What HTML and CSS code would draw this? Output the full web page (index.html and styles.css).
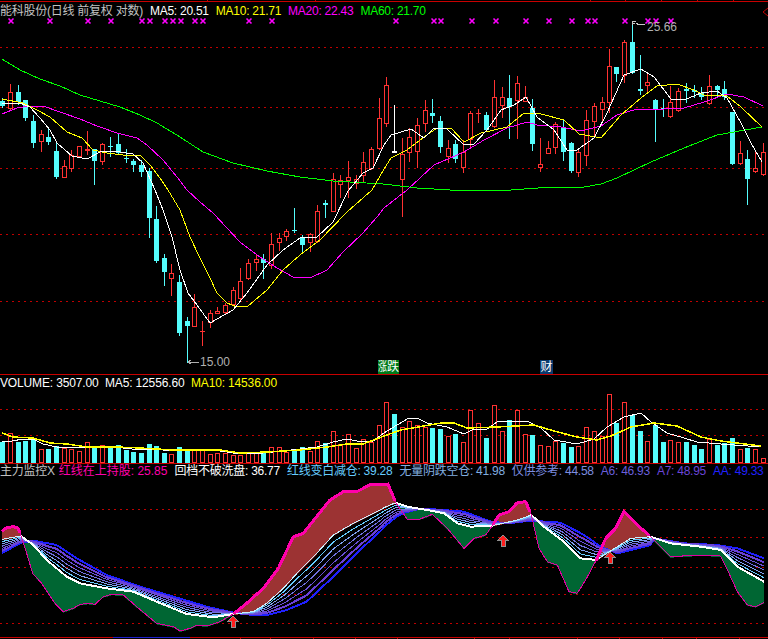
FILE: index.html
```html
<!DOCTYPE html>
<html lang="zh">
<head>
<meta charset="utf-8">
<title>能科股份 日线</title>
<link rel="stylesheet" href="styles.css">
</head>
<body>
<main class="chart">
  <section class="panel panel-price">
    <svg class="plot" id="price" width="768" height="374"></svg>
    <div class="legend">
      <span class="t-grey">能科股份(日线 前复权 对数)</span>
      <span class="t-white">MA5: 20.51</span>
      <span class="t-yellow">MA10: 21.71</span>
      <span class="t-magenta">MA20: 22.43</span>
      <span class="t-green">MA60: 21.70</span>
    </div>
    <span class="mark mark-high">25.66</span>
    <span class="mark mark-low">15.00</span>
    <span class="badge badge-green"><span class="squeezed">涨</span>跌</span>
    <span class="badge badge-blue">财</span>
  </section>
  <section class="panel panel-volume">
    <svg class="plot" id="volume" width="768" height="89"></svg>
    <div class="legend">
      <span class="t-white">VOLUME: 3507.00</span>
      <span class="t-white">MA5: 12556.60</span>
      <span class="t-yellow">MA10: 14536.00</span>
    </div>
  </section>
  <section class="panel panel-ribbon">
    <svg class="plot" id="ribbon" width="768" height="176"></svg>
    <div class="legend">
      <span class="t-grey">主力监控X</span>
      <span class="t-pink">红线在上持股: 25.85</span>
      <span class="t-white">回档不破洗盘: 36.77</span>
      <span class="t-sky">红线变白减仓: 39.28</span>
      <span class="t-steel">无量阴跌空仓: 41.98</span>
      <span class="t-slate">仅供参考: 44.58</span>
      <span class="t-violet">A6: 46.93</span>
      <span class="t-purple">A7: 48.95</span>
      <span class="t-blue">AA: 49.33</span>
    </div>
  </section>
</main>
<script src="chart.js"></script>
</body>
</html>
```
FILE: styles.css
```css
html, body {
  margin: 0;
  padding: 0;
  background: #000;
}
.chart {
  width: 768px;
  height: 639px;
  display: flex;
  flex-direction: column;
  overflow: hidden;
  background: #000;
  font-family: "Liberation Sans", "Noto Sans CJK SC", sans-serif;
  font-size: 12px;
}
.panel {
  position: relative;
  flex: none;
}
.panel-price { height: 374px; }
.panel-volume { height: 89px; }
.panel-ribbon { height: 176px; }
.plot {
  position: absolute;
  left: 0;
  top: 0;
  display: block;
}
.legend {
  position: relative;
  display: flex;
  gap: 7px;
  white-space: nowrap;
  line-height: 14px;
  letter-spacing: -0.25px;
}
.panel-price .legend { padding-top: 4px; }
.panel-volume .legend {
  padding-top: 2px;
  gap: 6.5px;
  letter-spacing: -0.15px;
}
.panel-ribbon .legend { padding-top: 1px; }
.t-grey { color: #c0c0c0; }
.t-white { color: #fff; }
.t-yellow { color: #ffff00; }
.t-magenta { color: #ff00ff; }
.t-green { color: #00ff00; }
.t-pink {
  color: #ff00aa;
  margin-left: -3px;
  letter-spacing: 0;
}
.t-sky { color: #66ccff; }
.t-steel { color: #80aee0; }
.t-slate { color: #7d8ee0; }
.t-violet { color: #6a5fdc; }
.t-purple { color: #6a45d8; }
.t-blue { color: #2020ff; }
.mark {
  position: absolute;
  color: #b0b0b0;
  line-height: 14px;
}
.mark-high { left: 647px; top: 20px; }
.mark-low { left: 200px; top: 355px; }
.badge {
  position: absolute;
  top: 360px;
  height: 14px;
  line-height: 14px;
  color: #fff;
}
.badge-green {
  left: 378px;
  width: 21px;
  background: #007a1a;
  white-space: nowrap;
  display: flex;
}
.squeezed {
  display: block;
  width: 9px;
  transform: scaleX(0.75);
  transform-origin: left center;
}
.badge-blue {
  left: 540px;
  width: 13px;
  background: #0a3a6e;
  text-align: center;
}
```
FILE: chart.js
```js
var NS = "http://www.w3.org/2000/svg";
function el(parent, name, attrs) {
  var n = document.createElementNS(NS, name);
  for (var k in attrs) n.setAttribute(k, attrs[k]);
  parent.appendChild(n);
  return n;
}
function pts(flat) {
  var out = [];
  for (var i = 0; i < flat.length; i += 2) out.push(flat[i] + "," + flat[i + 1]);
  return out.join(" ");
}
function line(svg, flat, color, w) {
  el(svg, "polyline", { points: pts(flat), fill: "none", stroke: color, "stroke-width": w || 1, "shape-rendering": "crispEdges" });
}
function hline(svg, y, color, x1, x2, dash) {
  var a = { x1: x1, x2: x2, y1: y + 0.5, y2: y + 0.5, stroke: color, "shape-rendering": "crispEdges" };
  if (dash) a["stroke-dasharray"] = dash;
  el(svg, "line", a);
}
function rect(svg, x, y, w, h, fill, stroke) {
  var a = { x: x, y: y, width: w, height: h, fill: fill, "shape-rendering": "crispEdges" };
  if (stroke) a.stroke = stroke;
  el(svg, "rect", a);
}

var RED = "#ff3232", CYAN = "#54fcfc", GRID = "#c00000", EDGE = "#c80000";

// type, centre x, high, top, bottom, low, volume top
var C = [
["C",2,98,101,106,108,442],["R",10,84,92,109,110,433],["C",18,85,92,102,105,442],["C",25,100,100,118,121,441],
["C",33,115,121,143,148,439],["R",41,130,134,142,152,449],["C",48,128,137,142,145,449],["C",56,143,151,177,179,446],
["R",64,160,166,178,178,448],["R",71,150,155,169,172,449],["R",79,146,146,157,158,451],["R",87,131,149,151,155,442],
["C",94,149,149,161,185,447],["R",102,143,144,162,165,445],["C",110,137,146,147,157,447],["C",118,133,144,153,154,445],
["C",126,149,158,159,163,450],["C",133,159,161,165,172,452],["C",141,160,165,172,177,453],["C",149,168,171,218,238,444],
["C",156,206,219,261,263,446],["C",164,254,258,272,286,453],["R",171,264,273,279,296,454],["C",179,275,282,333,336,447],
["C",187,317,321,326,363,450],["R",194,294,307,327,327,450],["R",202,321,331,332,346,449],["R",210,310,313,323,328,454],
["R",217,307,311,314,314,453],["R",225,303,305,313,315,453],["R",233,287,290,305,306,455],["R",240,268,281,299,300,455],
["R",248,259,263,279,280,452],["R",256,255,259,263,271,452],["C",263,254,259,263,279,453],["R",271,233,244,266,269,447],
["R",279,233,238,243,251,447],["R",286,229,231,237,241,452],["C",294,208,230,231,233,449],["C",302,235,238,245,252,447],
["R",310,233,234,243,252,451],["R",317,205,211,242,243,441],["C",325,200,203,205,218,443],["R",333,173,179,212,212,431],
["R",340,175,180,185,198,444],["R",348,161,177,181,198,434],["R",356,175,179,184,189,448],["R",363,152,162,176,183,439],
["R",371,147,149,169,170,442],["R",379,98,118,149,150,425],["R",386,77,85,124,127,402],["W",394,105,151,153,153,414],
["R",402,138,154,180,217,427],["R",409,128,137,153,162,421],["R",417,118,125,152,168,425],["R",425,100,110,124,132,427],
["C",432,99,113,116,123,428],["C",440,116,121,147,153,429],["R",448,140,148,157,163,436],["C",455,140,144,159,163,434],
["R",463,140,152,168,173,442],["R",470,111,113,140,147,410],["R",478,109,113,114,123,423],["C",486,112,115,130,132,438],
["R",494,80,97,127,128,405],["R",502,87,97,106,118,431],["C",509,75,98,107,139,420],["R",517,76,83,101,139,410],
["R",525,86,97,102,102,434],["C",532,99,108,144,151,435],["R",540,138,164,168,172,445],["R",548,141,148,154,154,446],
["R",555,122,124,148,154,441],["C",563,119,127,152,161,443],["C",571,142,143,171,173,447],["R",578,150,152,173,177,446],
["R",586,110,120,156,166,427],["R",594,103,106,122,137,431],["R",602,97,102,110,122,436],["R",609,49,66,103,113,394],
["C",616,67,67,74,82,423],["R",624,40,42,76,83,402],["C",632,21,42,73,74,415],["C",640,55,89,91,95,431],
["R",647,73,82,86,93,441],["C",655,99,100,110,142,425],["C",663,99,108,109,117,442],["R",670,86,102,117,118,440],
["R",678,88,91,111,112,442],["C",686,83,89,91,103,442],["C",694,85,90,92,98,445],["C",701,87,93,97,100,449],
["R",709,75,86,104,105,439],["C",717,85,86,90,97,445],["C",724,81,89,97,100,443],["C",732,112,112,164,165,438],
["R",740,141,153,164,165,449],["C",747,150,159,179,205,448],["R",755,150,168,172,173,449],["R",763,143,152,175,176,458]
];

var MA60 = [2,59,20,70,40,79,60,86,80,95,100,101,120,107,140,115,157,123,180,137,203,152,233,163,267,171,300,177,333,181,383,184,417,188,450,190,511,190,551,187,584,187,601,184,617,178,651,162,684,148,717,135,762,127];
var MA20 = [2,114,17,108,30,106,43,106,60,112,80,119,97,126,117,133,137,138,147,145,163,160,177,177,187,190,200,202,213,213,240,242,257,255,277,268,293,277,310,278,327,270,343,252,363,233,377,217,384,208,407,190,434,165,464,152,484,140,507,128,527,122,537,125,561,127,581,131,601,126,617,115,637,109,664,109,684,108,704,102,727,94,744,97,763,106];
var MA10 = [2,99,23,103,37,110,50,117,67,132,82,138,93,150,107,153,123,155,140,155,150,165,160,178,168,190,180,210,190,237,200,258,210,278,217,293,227,303,237,307,248,306,267,290,283,270,300,255,320,240,347,212,372,190,384,169,391,158,407,150,424,137,437,128,451,128,464,142,481,133,507,127,524,113,541,114,564,120,579,134,601,138,621,115,641,98,657,86,677,84,694,90,704,95,727,96,741,107,762,127];
var MA5 = [2,103,20,103,30,107,40,118,50,130,57,143,72,156,87,159,100,152,113,151,133,154,143,163,155,190,163,210,172,237,180,270,188,293,197,305,210,323,233,310,247,293,267,265,283,250,300,238,317,237,333,222,348,191,363,173,373,168,384,145,391,135,401,132,411,129,424,138,434,128,447,129,464,145,474,144,487,130,501,110,514,105,526,97,537,117,554,130,567,150,577,150,594,138,607,113,624,75,641,69,654,77,671,99,684,100,701,93,717,91,727,98,741,123,751,143,762,162];

function drawPrice() {
  var s = document.getElementById("price");
  hline(s, 1, EDGE, 0, 768);
  [207, 315, 590, 625, 661, 697, 733].forEach(function (x) { rect(s, x, 0, 1, 1, EDGE); });
  [47, 107, 168, 234, 301].forEach(function (y) { hline(s, y, GRID, 0, 768, "2 4"); });
  C.forEach(function (c) {
    var col = c[0] === "C" ? CYAN : c[0] === "W" ? "#fff" : RED, x = c[1] - 2;
    rect(s, x + 2, c[2], 1, c[5] - c[2], col);
    if (c[4] - c[3] <= 2) rect(s, x, c[3], 5, Math.max(c[4] - c[3], 1), col);
    else if (c[0] === "R") rect(s, x + 0.5, c[3] + 0.5, 4, c[4] - c[3] - 1, "#000", col);
    else rect(s, x, c[3], 5, c[4] - c[3], col);
  });
  line(s, MA60, "#00ff00");
  line(s, MA20, "#ff00ff");
  line(s, MA10, "#ffff00");
  line(s, MA5, "#ffffff");
  [11,50,88,111,142,150,165,173,181,195,203,249,272,396,434,441,472,496,526,549,572,588,595,625,648,656,671].forEach(function (x) {
    el(s, "path", { d: "M" + (x - 2.5) + " 18.5l5 5m0-5l-5 5", stroke: "#ff00ff", fill: "none", "stroke-width": 1.6 });
  });
  el(s, "path", { d: "M768 8l-5 4 5 4", stroke: "#c00000", fill: "none" });
  el(s, "path", { d: "M632.5 25v-4h3M632.5 23h2M636 23l3 2 3-1 3 1", stroke: "#c8c8c8", fill: "none", "shape-rendering": "crispEdges" });
  el(s, "path", { d: "M188 362h11M188 362l3-2M188 362l3 2", stroke: "#b0b0b0", fill: "none", "shape-rendering": "crispEdges" });
}

var VMA5 = [2,441,12,441,23,439,33,439,43,444,57,447,70,448,83,447,107,447,123,448,140,450,157,449,170,451,187,450,213,450,227,452,240,454,263,453,283,451,300,449,317,447,333,442,347,439,357,441,373,441,384,433,397,425,409,418,417,418,427,423,447,427,464,434,474,429,487,429,497,422,511,421,527,421,541,428,554,440,577,444,594,439,607,427,624,417,641,413,651,422,667,433,684,438,697,442,721,444,761,447];
var VMA10 = [2,433,13,437,33,438,50,443,67,444,87,447,117,447,140,448,173,450,220,450,240,453,267,452,300,450,327,447,347,444,363,444,384,436,401,430,424,426,441,423,454,423,467,428,497,427,534,425,554,431,577,437,597,440,611,436,631,427,654,423,677,426,701,437,721,441,761,446];

function drawVolume() {
  var s = document.getElementById("volume"), top = 374;
  hline(s, 0, EDGE, 0, 768);
  [409, 435].forEach(function (y) { hline(s, y - top, GRID, 0, 768, "2 4"); });
  C.forEach(function (c) {
    var y = c[6] - top, b = 89, x = c[1] - 2;
    if (c[0] === "R") rect(s, x + 0.5, y + 0.5, 4, b - y - 1, "#000", RED);
    else rect(s, x, y, 5, b - y, CYAN);
  });
  var shift = function (a) { return a.map(function (v, i) { return i % 2 ? v - top : v; }); };
  line(s, shift(VMA5), "#ffffff");
  line(s, shift(VMA10), "#ffff00", 1.5);
}

function conv(left, right) {
  var out = [];
  for (var i = 0; i < left.length; i += 2) out.push([left[i] / 3, 460 + left[i + 1] / 3]);
  for (i = 0; i < right.length; i += 2) out.push([384 + right[i] / 3, 460 + right[i + 1] / 3]);
  return out;
}
function at(curve, x) {
  if (x <= curve[0][0]) return curve[0][1];
  for (var i = 1; i < curve.length; i++) {
    if (x <= curve[i][0]) {
      var a = curve[i - 1], b = curve[i];
      return a[1] + (b[1] - a[1]) * (x - a[0]) / (b[0] - a[0]);
    }
  }
  return curve[curve.length - 1][1];
}
var P = conv(
  [5,215,20,203,40,200,55,205,63,228,80,280,98,340,125,370,165,430,190,455,220,445,240,433,265,430,285,433,310,410,335,403,370,405,410,440,470,490,520,500,540,513,570,505,590,495,620,498,660,485,700,462,740,430,790,385,835,325,880,230,910,220,950,170,990,120,1030,95,1070,95,1115,72,1150,75],
  [12,72,35,128,70,178,105,178,145,163,190,205,240,265,270,235,305,225,325,197,345,165,375,155,400,128,425,125,442,165,465,265,490,305,520,315,555,395,580,400,605,360,637,300,665,235,695,205,720,155,760,195,800,230,860,290,950,285,1010,288,1035,340,1060,395,1090,435,1115,440,1140,428]);
var W = conv(
  [5,238,63,228,100,255,140,300,200,350,240,370,320,385,400,395,470,425,560,462,640,472,700,462,760,455,800,430,850,385,900,330,950,280,1000,225,1060,190,1150,145],
  [0,143,35,128,70,140,130,150,180,160,220,190,260,200,325,197,400,180,442,165,480,200,540,245,590,295,637,300,700,260,740,235,800,230,860,250,950,260,1010,270,1060,320,1140,365]);
var B = conv(
  [5,280,63,248,100,242,170,255,230,295,320,345,420,380,520,410,620,440,700,458,760,465,800,465,860,450,920,425,1000,350,1080,270,1150,205],
  [0,200,35,172,60,158,100,148,150,148,240,155,320,185,370,190,440,182,530,188,600,225,650,260,700,280,800,255,810,235,900,250,1000,255,1060,265,1140,295]);

function drawRibbon() {
  var s = document.getElementById("ribbon"), top = 463, x;
  hline(s, 0, EDGE, 0, 768);
  [509, 537, 567, 594, 623].forEach(function (y) {
    hline(s, y - top, GRID, y === 537 ? 384 : 0, 768, "2 4");
  });
  hline(s, 637 - top, EDGE, 0, 768);
  rect(s, 113, 637 - top, 77, 1, "#2020d0");
  [240,270,313,355,397,474,509,577,619,662,696,739].forEach(function (t) { rect(s, t, 638 - top, 1, 1, EDGE); });
  var end = 764;
  for (x = 2; x < end; x++) {
    var p = at(P, x + 0.5), w = at(W, x + 0.5);
    rect(s, x, Math.min(p, w) - top, 1, Math.abs(p - w) + 1, p < w ? "#9c3333" : "#006633");
  }
  var cols = ["#2020ff", "#6a40d8", "#6a50d8", "#7070e0", "#80a0f0", "#66ccff"];
  var widths = [2, 2, 1, 1, 1, 1];
  cols.forEach(function (col, k) {
    var t = k / 6, flat = [];
    for (x = 2; x <= end; x += 2) {
      var yb = at(B, x), yw = at(W, x);
      flat.push(x, yb + (yw - yb) * t - top);
    }
    line(s, flat, col, widths[k]);
  });
  // boundary lines change weight with the side the upper curve is on
  function strokeSplit(curve, test, onCol, onW, offCol, offW) {
    var seg = [], state = null;
    function flush() {
      if (seg.length > 2) line(s, seg, state ? onCol : offCol, state ? onW : offW);
      seg = seg.slice(-2);
    }
    for (var i = 2; i <= end; i++) {
      var h = test(i);
      if (state !== null && h !== state) flush();
      state = h;
      seg.push(i, at(curve, i) - top);
    }
    flush();
  }
  var above = function (i) { return at(P, i) < at(W, i) - 1; };
  strokeSplit(W, above, "#c8f0ff", 1, "#ffffff", 2);
  strokeSplit(P, above, "#ff00aa", 3, "#e000a0", 1);
  [[233, 622], [503, 541], [610, 558]].forEach(function (a) {
    var d = "M" + a[0] + " " + (a[1] - 6 - top) + "l5 5h-3v6h-4v-6h-3z";
    el(s, "path", { d: d, fill: "#ff1e1e", stroke: "#909090", "stroke-width": 1, "shape-rendering": "crispEdges" });
  });
}
drawPrice();
drawVolume();
drawRibbon();
```
